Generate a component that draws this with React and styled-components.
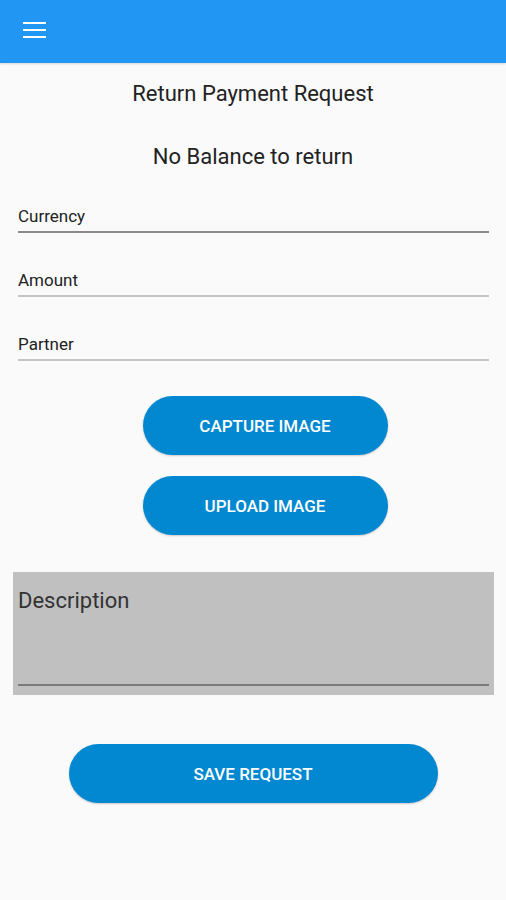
import React from 'react'
import styled, { createGlobalStyle } from 'styled-components'

const GlobalStyle = createGlobalStyle`
    html, body {
        margin: 0;
        padding: 0;
        background: #fafafa;
        font-family: Roboto, "Liberation Sans", sans-serif;
    }
`;

const Screen = styled.div`
    width: 506px;
    min-height: 900px;
    background: #fafafa;
    display: flex;
    flex-direction: column;
`;

const TopBar = styled.header`
    height: 63px;
    background: #2196f3;
    display: flex;
    align-items: center;
    padding-left: 23px;
    box-shadow: 0 1px 2px rgba(0, 0, 0, 0.15);
`;

const MenuButton = styled.div`
    width: 23px;
    display: flex;
    flex-direction: column;
    gap: 5px;
    margin-top: -3px;

    & span {
        display: block;
        height: 2px;
        background: #fff;
    }
`;

const Title = styled.h1`
    margin: 18px 0 0;
    font-size: 22px;
    font-weight: 400;
    color: #222;
    text-align: center;
    line-height: 26px;
`;

const Balance = styled.p`
    margin: 37px 0 0;
    font-size: 22px;
    color: #222;
    text-align: center;
    line-height: 26px;
`;

const Form = styled.div`
    padding: 0 17px 0 18px;
    display: flex;
    flex-direction: column;
    margin-top: 36px;
    gap: 37px;
`;

const Field = styled.div`
    display: flex;
    flex-direction: column;
    & label {
        font-size: 17px;
        color: #222;
        line-height: 20px;
        padding-bottom: 5px;
    }
    & div {
        height: 2px;
        background: ${({ active }) => (active ? '#8a8a8a' : '#c4c4c4')};
    }
`;

const Buttons = styled.div`
    display: flex;
    flex-direction: column;
    align-items: center;
    gap: 21px;
    margin-top: 35px;
    padding-left: 24px;
`;

const PillButton = styled.button`
    width: ${({ wide }) => (wide ? '369px' : '245px')};
    height: 59px;
    border: none;
    border-radius: 30px;
    background: #0288d1;
    color: #fff;
    font-family: Roboto, "Liberation Sans", sans-serif;
    font-size: 17px;
    font-weight: 500;
    box-shadow: 0 1px 2px rgba(0, 0, 0, 0.2);
`;

const DescriptionBox = styled.div`
    margin: 37px 12px 0 13px;
    height: 123px;
    background: #c0c0c0;
    display: flex;
    flex-direction: column;
    padding: 16px 5px 0;
    box-sizing: border-box;

    & span {
        font-size: 22px;
        color: #333;
        line-height: 26px;
        flex: 1;
    }
    & div {
        height: 2px;
        background: #7a7a7a;
        margin-bottom: 9px;
    }
`;

const SaveRow = styled.div`
    display: flex;
    justify-content: center;
    margin-top: 49px;
    padding-left: 0;
`;

export default function App() {
    return (
        <Screen>
            <GlobalStyle />
            <TopBar>
                <MenuButton>
                    <span />
                    <span />
                    <span />
                </MenuButton>
            </TopBar>
            <Title>Return Payment Request</Title>
            <Balance>No Balance to return</Balance>
            <Form>
                <Field active>
                    <label>Currency</label>
                    <div />
                </Field>
                <Field>
                    <label>Amount</label>
                    <div />
                </Field>
                <Field>
                    <label>Partner</label>
                    <div />
                </Field>
            </Form>
            <Buttons>
                <PillButton>CAPTURE IMAGE</PillButton>
                <PillButton>UPLOAD IMAGE</PillButton>
            </Buttons>
            <DescriptionBox>
                <span>Description</span>
                <div />
            </DescriptionBox>
            <SaveRow>
                <PillButton wide>SAVE REQUEST</PillButton>
            </SaveRow>
        </Screen>
    )
}
